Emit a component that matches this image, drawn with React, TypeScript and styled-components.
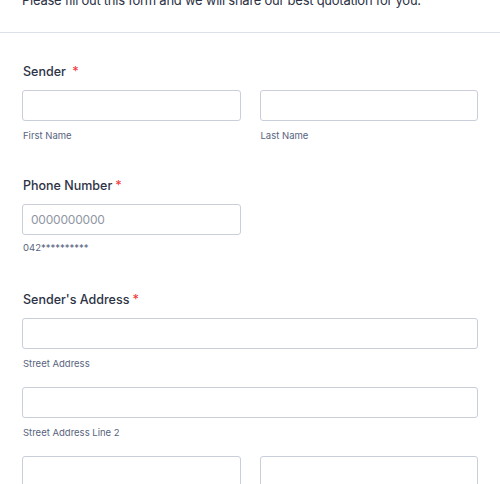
import styled, { createGlobalStyle } from 'styled-components'

const GlobalStyle = createGlobalStyle`
  html, body {
    margin: 0;
    padding: 0;
    background: #fff;
  }
  body {
    font-family: Inter, 'Noto Sans', sans-serif;
    color: #2c3345;
  }
`

const Page = styled.div`
  width: 500px;
  height: 484px;
  overflow: hidden;
`

const Header = styled.div`
  margin-top: -9px;
  padding: 0 22px 23px;
  border-bottom: 1px solid #dfe1ea;

  > p {
    margin: 0;
    font-size: 13px;
    letter-spacing: -0.25px;
    line-height: 18px;
    color: #2c3345;
    white-space: nowrap;
  }
`

const Form = styled.div`
  padding: 30px 22px 0;
  display: flex;
  flex-direction: column;
  gap: 34px;
`

const Field = styled.div`
  display: flex;
  flex-direction: column;
`

const Label = styled.label`
  margin: 0 0 9px 1px;
  font-size: 12.5px;
  font-weight: 500;
  line-height: 18px;
  color: #2c3345;

  > span {
    margin-left: 3px;
    color: #f23a3c;
  }
`

const Row = styled.div<{ $half?: boolean }>`
  display: grid;
  grid-template-columns: ${({ $half }) => ($half ? '219px' : '1fr 1fr')};
  column-gap: 19px;
  row-gap: 16px;
`

const Cell = styled.div<{ $wide?: boolean }>`
  display: flex;
  flex-direction: column;
  grid-column: ${({ $wide }) => ($wide ? '1 / -1' : 'auto')};
`

const Input = styled.input`
  box-sizing: border-box;
  width: 100%;
  height: 31px;
  padding: 0 8px;
  border: 1px solid #c9cedb;
  border-radius: 3px;
  background: #fff;
  font-family: Inter, 'Noto Sans', sans-serif;
  font-size: 12px;
  letter-spacing: -0.2px;
  color: #2c3345;
  outline: none;

  &::placeholder {
    color: #8f96a3;
  }
`

const SubLabel = styled.span<{ $tight?: boolean }>`
  margin: ${({ $tight }) => ($tight ? '6px 0 2px 1px' : '8px 0 0 1px')};
  font-size: 9.5px;
  line-height: 14px;
  color: #57647e;
`

export default function App() {
  return (
    <>
      <GlobalStyle />
      <Page>
        <Header>
          <p>Please fill out this form and we will share our best quotation for you.</p>
        </Header>
        <Form>
          <Field>
            <Label>
              Sender <span>*</span>
            </Label>
            <Row>
              <Cell>
                <Input />
                <SubLabel>First Name</SubLabel>
              </Cell>
              <Cell>
                <Input />
                <SubLabel>Last Name</SubLabel>
              </Cell>
            </Row>
          </Field>

          <Field>
            <Label>
              Phone Number<span>*</span>
            </Label>
            <Row $half>
              <Cell>
                <Input placeholder="0000000000" />
                <SubLabel $tight>042**********</SubLabel>
              </Cell>
            </Row>
          </Field>

          <Field>
            <Label>
              Sender's Address<span>*</span>
            </Label>
            <Row>
              <Cell $wide>
                <Input />
                <SubLabel>Street Address</SubLabel>
              </Cell>
              <Cell $wide>
                <Input />
                <SubLabel>Street Address Line 2</SubLabel>
              </Cell>
              <Cell>
                <Input />
              </Cell>
              <Cell>
                <Input />
              </Cell>
            </Row>
          </Field>
        </Form>
      </Page>
    </>
  )
}
